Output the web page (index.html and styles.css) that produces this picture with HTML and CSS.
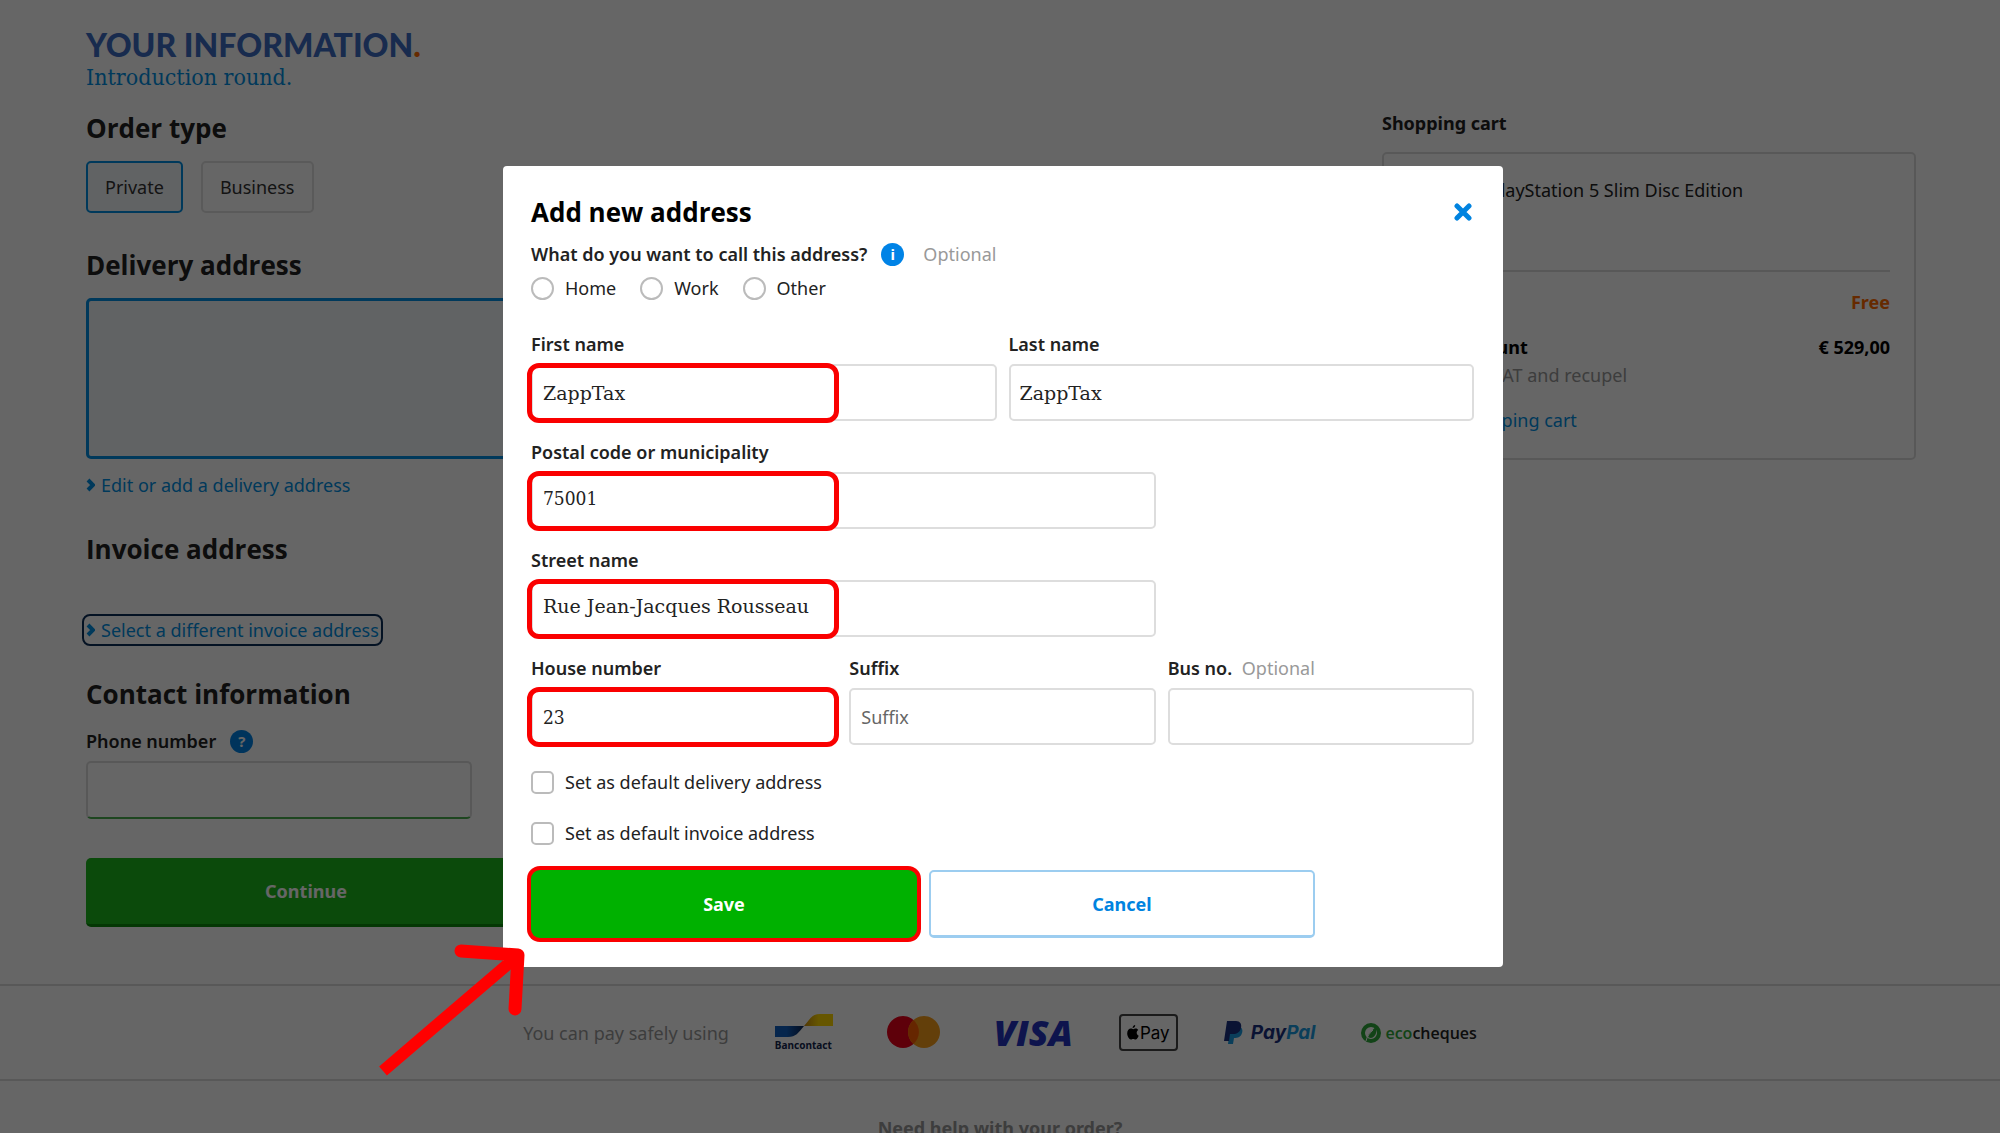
FILE: index.html
```html
<!DOCTYPE html>
<html lang="en">

<head>
    <meta charset="UTF-8">
    <meta name="viewport" content="width=device-width, initial-scale=1.0">
    <title>Your information</title>
    <link rel="stylesheet" href="styles.css">
</head>

<body>
    <div class="page">
        <main class="checkout">
            <h1>YOUR INFORMATION<span class="dot">.</span></h1>
            <p class="subtitle">Introduction round.</p>

            <h2>Order type</h2>
            <div class="order-types">
                <button type="button" class="type active">Private</button>
                <button type="button" class="type">Business</button>
            </div>

            <h2>Delivery address</h2>
            <div class="address-box"></div>
            <a href="#" class="link"><svg class="chevron" viewBox="0 0 9 14"><path d="M2 2l5 5-5 5"/></svg>Edit or add a delivery address</a>

            <h2>Invoice address</h2>
            <a href="#" class="link invoice focused"><svg class="chevron" viewBox="0 0 9 14"><path d="M2 2l5 5-5 5"/></svg>Select a different invoice address</a>

            <h2>Contact information</h2>
            <div class="label-row">
                <label for="phone">Phone number</label>
                <span class="badge">?</span>
            </div>
            <input type="tel" id="phone" class="phone">
            <button type="button" class="continue">Continue</button>
        </main>

        <aside class="cart">
            <h3>Shopping cart</h3>
            <div class="cart-box">
                <p class="product">Sony PlayStation 5 Slim Disc Edition</p>
                <div class="cart-row"><span>Delivery</span><strong class="free">Free</strong></div>
                <div class="cart-row total"><strong>Total amount</strong><strong>€ 529,00</strong></div>
                <p class="vat">Including VAT and recupel</p>
                <a href="#" class="link"><svg class="chevron" viewBox="0 0 9 14"><path d="M2 2l5 5-5 5"/></svg>Edit shopping cart</a>
            </div>
        </aside>
    </div>

    <footer>
        <div class="payments">
            <span class="pay-text">You can pay safely using</span>
            <div class="bancontact">
                <svg viewBox="0 0 58 24">
                    <defs>
                        <linearGradient id="bcBlue"><stop offset=".4" stop-color="#0f5fc0"/><stop offset="1" stop-color="#0a2250"/></linearGradient>
                        <linearGradient id="bcYellow"><stop offset="0" stop-color="#c98a10"/><stop offset=".5" stop-color="#ffd800"/></linearGradient>
                    </defs>
                    <path fill="url(#bcBlue)" d="M0 12h29c-6 7-8 11-16 11H0z"/>
                    <path fill="url(#bcYellow)" d="M29 12c6-7 8-12 16-12h13v12z"/>
                </svg>
                <span>Bancontact</span>
            </div>
            <svg class="mastercard" viewBox="0 0 53 33">
                <circle cx="16" cy="16" r="16" fill="#eb001b"/>
                <circle cx="37" cy="16" r="16" fill="#f79e1b"/>
                <path fill="#ff5f00" d="M26.500 4a16 16 0 0 1 0 24a16 16 0 0 1 0-24z"/>
            </svg>
            <span class="visa">VISA</span>
            <div class="applepay">
                <svg viewBox="0 0 12 15">
                    <path d="M8.200 0c.1 1.700-1.200 3-2.600 3C5.500 1.500 6.800.2 8.200 0zM11.300 5.100C10.200 5.800 9.700 6.700 9.700 7.800c0 1.400.8 2.400 2 2.900-.6 1.800-1.900 3.800-3.200 3.800-.9 0-1.200-.5-2.300-.5s-1.500.5-2.300.5C2.200 14.500.2 11.400.2 8.300c0-3 1.900-4.700 3.700-4.700 1 0 1.800.6 2.400.6.600 0 1.500-.7 2.700-.7.8 0 1.800.5 2.300 1.600z"/>
                </svg>
                <span>Pay</span>
            </div>
            <div class="paypal">
                <svg viewBox="0 0 19 23">
                    <path fill="#1a9be0" d="M6 6h9c3 0 4 3 3 6-1 4-4 5-8 5l-1 6H4z"/>
                    <path fill="#1b3080" d="M3 0h9c4 0 6 3 5 7-1 4-4 6-8 6H6l-1 7H0z"/>
                </svg>
                <span>Pay<i>Pal</i></span>
            </div>
            <div class="eco">
                <svg viewBox="0 0 20 20">
                    <circle cx="10" cy="10" r="8" fill="none" stroke="#2da83a" stroke-width="4"/>
                    <path fill="#2da83a" d="M15 3c1 6 0 11-5 12-2 0-3-1-3-2 1-4 5-5 8-10z"/>
                    <path fill="none" stroke="#fff" d="M5 18c1-5 4-8 7-11"/>
                </svg>
                <span><em>eco</em>cheques</span>
            </div>
        </div>
        <p class="help">Need help with your order?</p>
    </footer>

    <div class="overlay">
        <form class="modal" role="dialog" aria-labelledby="modalTitle">
            <div class="modal-head">
                <h2 id="modalTitle">Add new address</h2>
                <button type="button" class="close" aria-label="Close">
                    <svg viewBox="0 0 18 18"><path d="M3 3l12 12M15 3L3 15"/></svg>
                </button>
            </div>

            <div class="label-row">
                <span class="label">What do you want to call this address?</span>
                <span class="badge">i</span>
                <span class="optional">Optional</span>
            </div>
            <div class="radios">
                <label class="choice"><input type="radio" name="addressName">Home</label>
                <label class="choice"><input type="radio" name="addressName">Work</label>
                <label class="choice"><input type="radio" name="addressName">Other</label>
            </div>

            <div class="fields">
                <div class="field half marked">
                    <label for="firstName">First name</label>
                    <input type="text" id="firstName" value="ZappTax">
                </div>
                <div class="field half last-name">
                    <label for="lastName">Last name</label>
                    <input type="text" id="lastName" value="ZappTax">
                </div>
                <div class="field wide marked">
                    <label for="postal">Postal code or municipality</label>
                    <input type="text" id="postal" class="number" value="75001">
                </div>
                <div class="field wide marked">
                    <label for="street">Street name</label>
                    <input type="text" id="street" value="Rue Jean-Jacques Rousseau">
                </div>
                <div class="field third first marked">
                    <label for="house">House number</label>
                    <input type="text" id="house" class="number" value="23">
                </div>
                <div class="field third">
                    <label for="suffix">Suffix</label>
                    <input type="text" id="suffix" placeholder="Suffix">
                </div>
                <div class="field third">
                    <label for="bus">Bus no. <span class="optional">Optional</span></label>
                    <input type="text" id="bus">
                </div>
            </div>

            <div class="checks">
                <label class="choice"><input type="checkbox">Set as default delivery address</label>
                <label class="choice"><input type="checkbox">Set as default invoice address</label>
            </div>

            <div class="actions">
                <button type="button" class="save">Save</button>
                <button type="button" class="cancel">Cancel</button>
            </div>

            <svg class="arrow" viewBox="0 0 150 138">
                <path class="shaft" d="M5 127L137 14"/>
                <path class="head" d="M83 7l57 4-3 54"/>
            </svg>
        </form>
    </div>
</body>

</html>
```
FILE: styles.css
```css
*, *::after {
    box-sizing: border-box;
}

body {
    margin: 0;
    overflow: hidden;
    background-color: #fff;
    color: #222;
    font: 18px/24px "Noto Sans", "Open Sans", sans-serif;
}

h1, h2, h3, p {
    margin: 0;
}

button, input {
    font: inherit;
}

.page {
    display: flex;
    justify-content: space-between;
    padding: 27px 84px 57px 86px;
}

h1 {
    color: #3d6cc4;
    font: 900 32px/36px Lato, sans-serif;
}

.dot {
    color: #ff6a00;
}

.subtitle {
    margin-bottom: 19px;
    color: #0090e3;
    font: 23px/28px "DejaVu Serif Condensed", "DejaVu Serif", serif;
}

h2 {
    font: 700 26px/36px "Open Sans", sans-serif;
}

.checkout {
    width: 440px;
}

.checkout h2 {
    margin: 34px 0 15px;
}

.checkout .subtitle + h2 {
    margin-top: 0;
}

.order-types {
    display: flex;
    gap: 18px;
}

.type {
    height: 52px;
    padding: 0 17px;
    border: 2px solid #e0e0e0;
    border-radius: 5px;
    background-color: #fff;
    color: #333;
}

.type.active {
    border-color: #0090e3;
    background-color: #f3f7fb;
}

.address-box {
    height: 161px;
    margin-bottom: 14px;
    border: 3px solid #0090e3;
    border-radius: 5px;
    background-color: #f3f7fb;
}

.link {
    display: inline-flex;
    align-items: center;
    gap: 6px;
    color: #0090e3;
    text-decoration: none;
}

.chevron {
    width: 9px;
    height: 14px;
    fill: none;
    stroke: #0090e3;
    stroke-width: 4;
}

.invoice {
    margin-top: 36px;
}

.focused {
    border-radius: 4px;
    outline: 2px solid #0c2e58;
    outline-offset: 2px;
}

.label-row {
    display: flex;
    align-items: center;
    gap: 14px;
    font-weight: 600;
}

.checkout .label-row {
    margin-top: 17px;
}

.badge {
    width: 23px;
    height: 23px;
    border-radius: 50%;
    background-color: #0083e6;
    color: #fff;
    font-size: 15px;
    line-height: 23px;
    font-weight: 700;
    text-align: center;
}

.phone {
    display: block;
    width: 386px;
    height: 58px;
    margin: 8px 0 39px;
    border: 2px solid #ddd;
    border-bottom-color: #4caf50;
    border-radius: 5px;
    background-color: #fff;
}

.continue {
    width: 100%;
    height: 69px;
    border: 0;
    border-bottom: 3px solid #0a8a0a;
    border-radius: 5px;
    background-color: #1cb81c;
    color: #fff;
    font-weight: 700;
}

/* cart */
.cart {
    width: 534px;
    padding-top: 84px;
}

h3 {
    margin-bottom: 17px;
    font-size: 18px;
    line-height: 24px;
}

.cart-box {
    padding: 24px 24px 26px;
    border: 2px solid #ddd;
    border-radius: 5px;
}

.product {
    padding: 0 0 68px 36px;
    border-bottom: 2px solid #ddd;
}

.cart-row {
    display: flex;
    justify-content: space-between;
    margin-top: 18px;
}

.free {
    color: #ff6a00;
}

.total {
    margin-top: 21px;
    color: #000;
}

.vat {
    margin: 4px 0 21px;
    color: #999;
}

/* footer */
.payments {
    display: flex;
    align-items: center;
    justify-content: center;
    gap: 46px;
    height: 97px;
    border-top: 2px solid #ddd;
    border-bottom: 2px solid #ddd;
}

.pay-text {
    color: #999;
}

.bancontact {
    display: flex;
    flex-direction: column;
    color: #14264e;
    font-size: 10px;
    line-height: 14px;
    font-weight: 700;
}

.bancontact svg {
    width: 58px;
    height: 24px;
}

.mastercard {
    width: 53px;
    height: 33px;
    margin: 0 8px;
}

.visa {
    color: #2334c0;
    font: italic 800 36px/36px "Open Sans", sans-serif;
}

.applepay {
    display: flex;
    align-items: center;
    justify-content: center;
    gap: 1px;
    width: 59px;
    height: 37px;
    border: 2px solid #444;
    border-radius: 4px;
    color: #000;
    font: 17px/24px Inter, sans-serif;
}

.applepay svg {
    width: 12px;
    height: 15px;
}

.paypal {
    display: flex;
    align-items: center;
    gap: 8px;
    color: #1b3080;
    font: italic 700 19px/24px Inter, sans-serif;
}

.paypal svg {
    width: 19px;
    height: 23px;
}

.paypal i {
    color: #1a9be0;
}

.eco {
    display: flex;
    align-items: center;
    gap: 4px;
    font: 600 16px/24px "Open Sans", sans-serif;
}

.eco svg {
    width: 20px;
    height: 20px;
}

.eco em {
    color: #2da83a;
    font-style: normal;
}

.help {
    padding: 35px 0;
    color: #999;
    font-weight: 700;
    text-align: center;
}

/* modal */
.overlay {
    position: fixed;
    inset: 0;
    display: flex;
    align-items: center;
    justify-content: center;
    padding-left: 6px;
    background-color: rgba(0, 0, 0, 0.6);
}

.modal {
    position: relative;
    width: 1000px;
    padding: 28px 29px 29px 28px;
    border-radius: 4px;
    background-color: #fff;
}

.modal-head {
    display: flex;
    align-items: center;
    justify-content: space-between;
    margin-bottom: 12px;
    color: #000;
}

.close {
    width: 22px;
    height: 22px;
    padding: 2px;
    border: 0;
    background: none;
}

.close svg {
    display: block;
    width: 18px;
    height: 18px;
    fill: none;
    stroke: #0083e0;
    stroke-width: 5;
    stroke-linecap: round;
}

.optional {
    color: #999;
    font-weight: 400;
}

.label-row .optional, .field .optional {
    margin-left: 5px;
}

.radios {
    display: flex;
    gap: 24px;
    margin: 10px 0 32px;
}

.choice {
    display: flex;
    align-items: center;
    gap: 11px;
}

.choice input {
    appearance: none;
    width: 23px;
    height: 23px;
    margin: 0;
    border: 2px solid #bbb;
    border-radius: 5px;
    background-color: #fff;
}

.choice input[type="radio"] {
    border-radius: 50%;
}

.fields {
    display: grid;
    grid-template-columns: repeat(6, 1fr);
    gap: 19px 12px;
}

.field {
    position: relative;
}

.half {
    grid-column: span 3;
}

.third {
    grid-column: span 2;
}

.third.first {
    grid-column: 1 / span 2;
}

.wide {
    grid-column: 1 / span 4;
}

.field label {
    display: block;
    margin-bottom: 8px;
    font-weight: 600;
}

.field input {
    display: block;
    width: 100%;
    height: 57px;
    padding: 0 10px;
    border: 2px solid #ddd;
    border-radius: 5px;
    background-color: #fff;
    color: #222;
    font: 19px/24px "DejaVu Serif", serif;
}

.wide input {
    padding-bottom: 5px;
}

.field .number {
    font-family: "DejaVu Serif Condensed", "DejaVu Serif", serif;
}

.field input::placeholder {
    color: #666;
    font: 18px/24px "Noto Sans", "Open Sans", sans-serif;
}

.last-name input {
    padding: 0 9px;
}

.marked::after {
    content: "";
    position: absolute;
    left: -4px;
    bottom: -2px;
    width: 312px;
    height: 60px;
    border: 5px solid #fa0000;
    border-radius: 12px;
}

.checks {
    display: grid;
    gap: 27px;
    margin: 25px 0;
}

.actions {
    display: flex;
    gap: 12px;
}

.actions button {
    width: 386px;
    height: 68px;
    border-radius: 5px;
    font-weight: 700;
}

.save {
    border: 0;
    background-color: #00b100;
    box-shadow: 0 0 0 4px #fa0000;
    color: #fff;
}

.actions .save {
    border-radius: 9px;
}

.cancel {
    border: 2px solid #9ccdf0;
    border-bottom-width: 3px;
    background-color: #fff;
    color: #0083e0;
}

.arrow {
    position: absolute;
    left: -125px;
    bottom: -115px;
    width: 150px;
    height: 138px;
    fill: none;
    stroke: #f00;
}

.shaft {
    stroke-width: 12;
}

.head {
    stroke-width: 13;
    stroke-linecap: round;
    stroke-linejoin: round;
}
```
